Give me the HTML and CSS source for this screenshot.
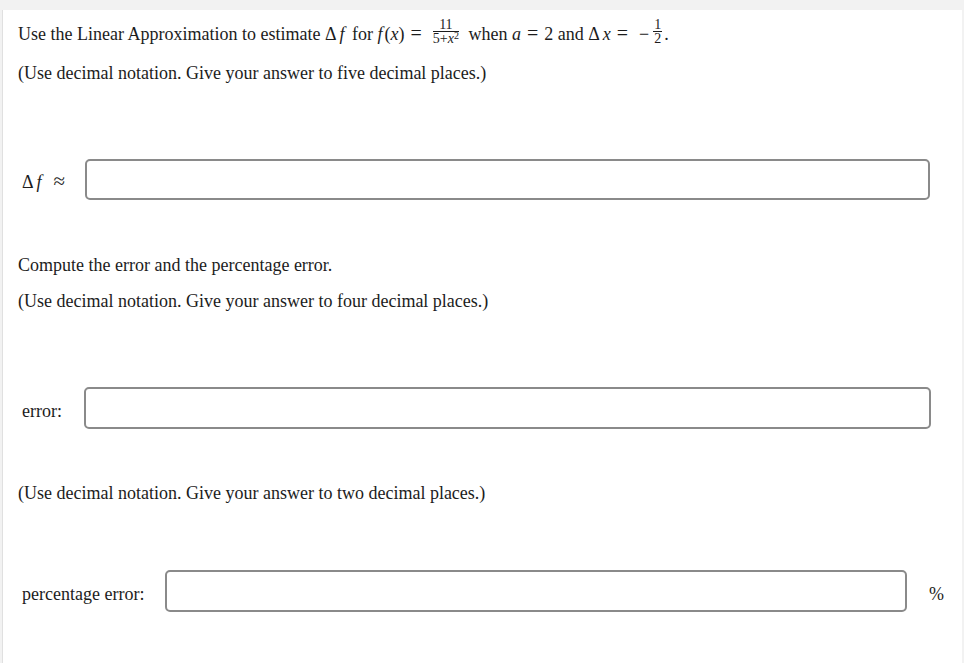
FILE: index.html
```html
<!DOCTYPE html>
<html>
<head>
<meta charset="utf-8">
<link rel="stylesheet" href="styles.css">
</head>
<body>
<div class="panel">
  <p class="line first">Use the Linear Approximation to estimate <span class="m"><span class="delta">Δ</span><i class="fe">f</i></span> for <span class="m"><i class="fi">f</i>(<i>x</i>)<span class="op">=</span></span><span class="frac big"><span class="num">11</span><span class="den">5+<i>x</i><sup>2</sup></span></span> when <span class="m"><i>a</i><span class="op">=</span>2</span> and <span class="m"><span class="delta">Δ</span><i>x</i><span class="op">=</span><span class="minus">−</span></span><span class="frac half"><span class="num">1</span><span class="den">2</span></span>.</p>
  <p class="line l2">(Use decimal notation. Give your answer to five decimal places.)</p>

  <div class="row r1">
    <span class="label"><span class="delta">Δ</span><i>f</i><span class="approx">≈</span></span>
    <span class="box"></span>
  </div>

  <p class="line l3">Compute the error and the percentage error.</p>
  <p class="line l4">(Use decimal notation. Give your answer to four decimal places.)</p>

  <div class="row r2">
    <span class="label">error:</span>
    <span class="box"></span>
  </div>

  <p class="line l5">(Use decimal notation. Give your answer to two decimal places.)</p>

  <div class="row r3">
    <span class="label">percentage error:</span>
    <span class="box"></span>
    <span class="unit">%</span>
  </div>
</div>
</body>
</html>
```
FILE: styles.css
```css
html, body {
  margin: 0;
  padding: 0;
  background: #f2f2f2;
}
body {
  font-family: "Liberation Serif", "Times New Roman", serif;
  font-size: 18px;
  color: #1c1c1c;
}
.panel {
  margin: 10px 2px 0 2px;
  background: #fff;
  border-left: 1px solid #e0e0e0;
  padding: 13px 31px 60px 15px;
  min-height: 600px;
}
.line {
  margin: 0;
  line-height: 20px;
  height: 20px;
  white-space: nowrap;
}
.m { white-space: nowrap; }
.delta { margin-right: 3px; }
.fe { margin-right: 3px; }
.fi { margin-right: 2px; }
.op { margin: 0 6px; font-size: 20px; }
.minus { margin-left: 5px; margin-right: 2px; }
.l2 { margin-top: 20px; }
.l3 { margin-top: 55px; }
.l4 { margin-top: 16px; }
.l5 { margin-top: 54px; }
.frac {
  display: inline-block;
  vertical-align: middle;
  text-align: center;
  font-size: 14px;
  line-height: 11px;
  margin: -6px 3px 0 3px;
  position: relative;
  top: -1px;
}
.frac.big { margin-left: 5px; margin-right: 5px; }
.frac .num {
  display: block;
  border-bottom: 1px solid #1c1c1c;
  padding: 0 1px 1px;
}
.frac .den {
  display: block;
  padding-top: 1px;
}
.frac sup {
  font-size: 10px;
  line-height: 0;
  vertical-align: 4px;
}
.half { margin-left: 2px; margin-right: 2px; }
.row {
  display: flex;
  align-items: center;
}
.r1 { margin-top: 76px; height: 41px; margin-right: 1px; }
.r2 { margin-top: 76px; height: 42px; }
.r3 { margin-top: 67px; height: 42px; margin-right: -12px; }
.label {
  padding-left: 4px;
  padding-top: 3px;
  white-space: nowrap;
}
.approx { margin-left: 12px; font-size: 21px; }
.r1 .label { padding-right: 20px; }
.r2 .label { padding-right: 22px; padding-top: 6px; }
.r3 .label { padding-right: 21px; padding-top: 7px; }
.box {
  flex: 1;
  align-self: stretch;
  border: 2px solid #8a8a8a;
  border-radius: 5px;
  background: #fff;
}
.unit {
  margin-left: 22px;
  width: 14px;
  padding-top: 7px;
}
```
